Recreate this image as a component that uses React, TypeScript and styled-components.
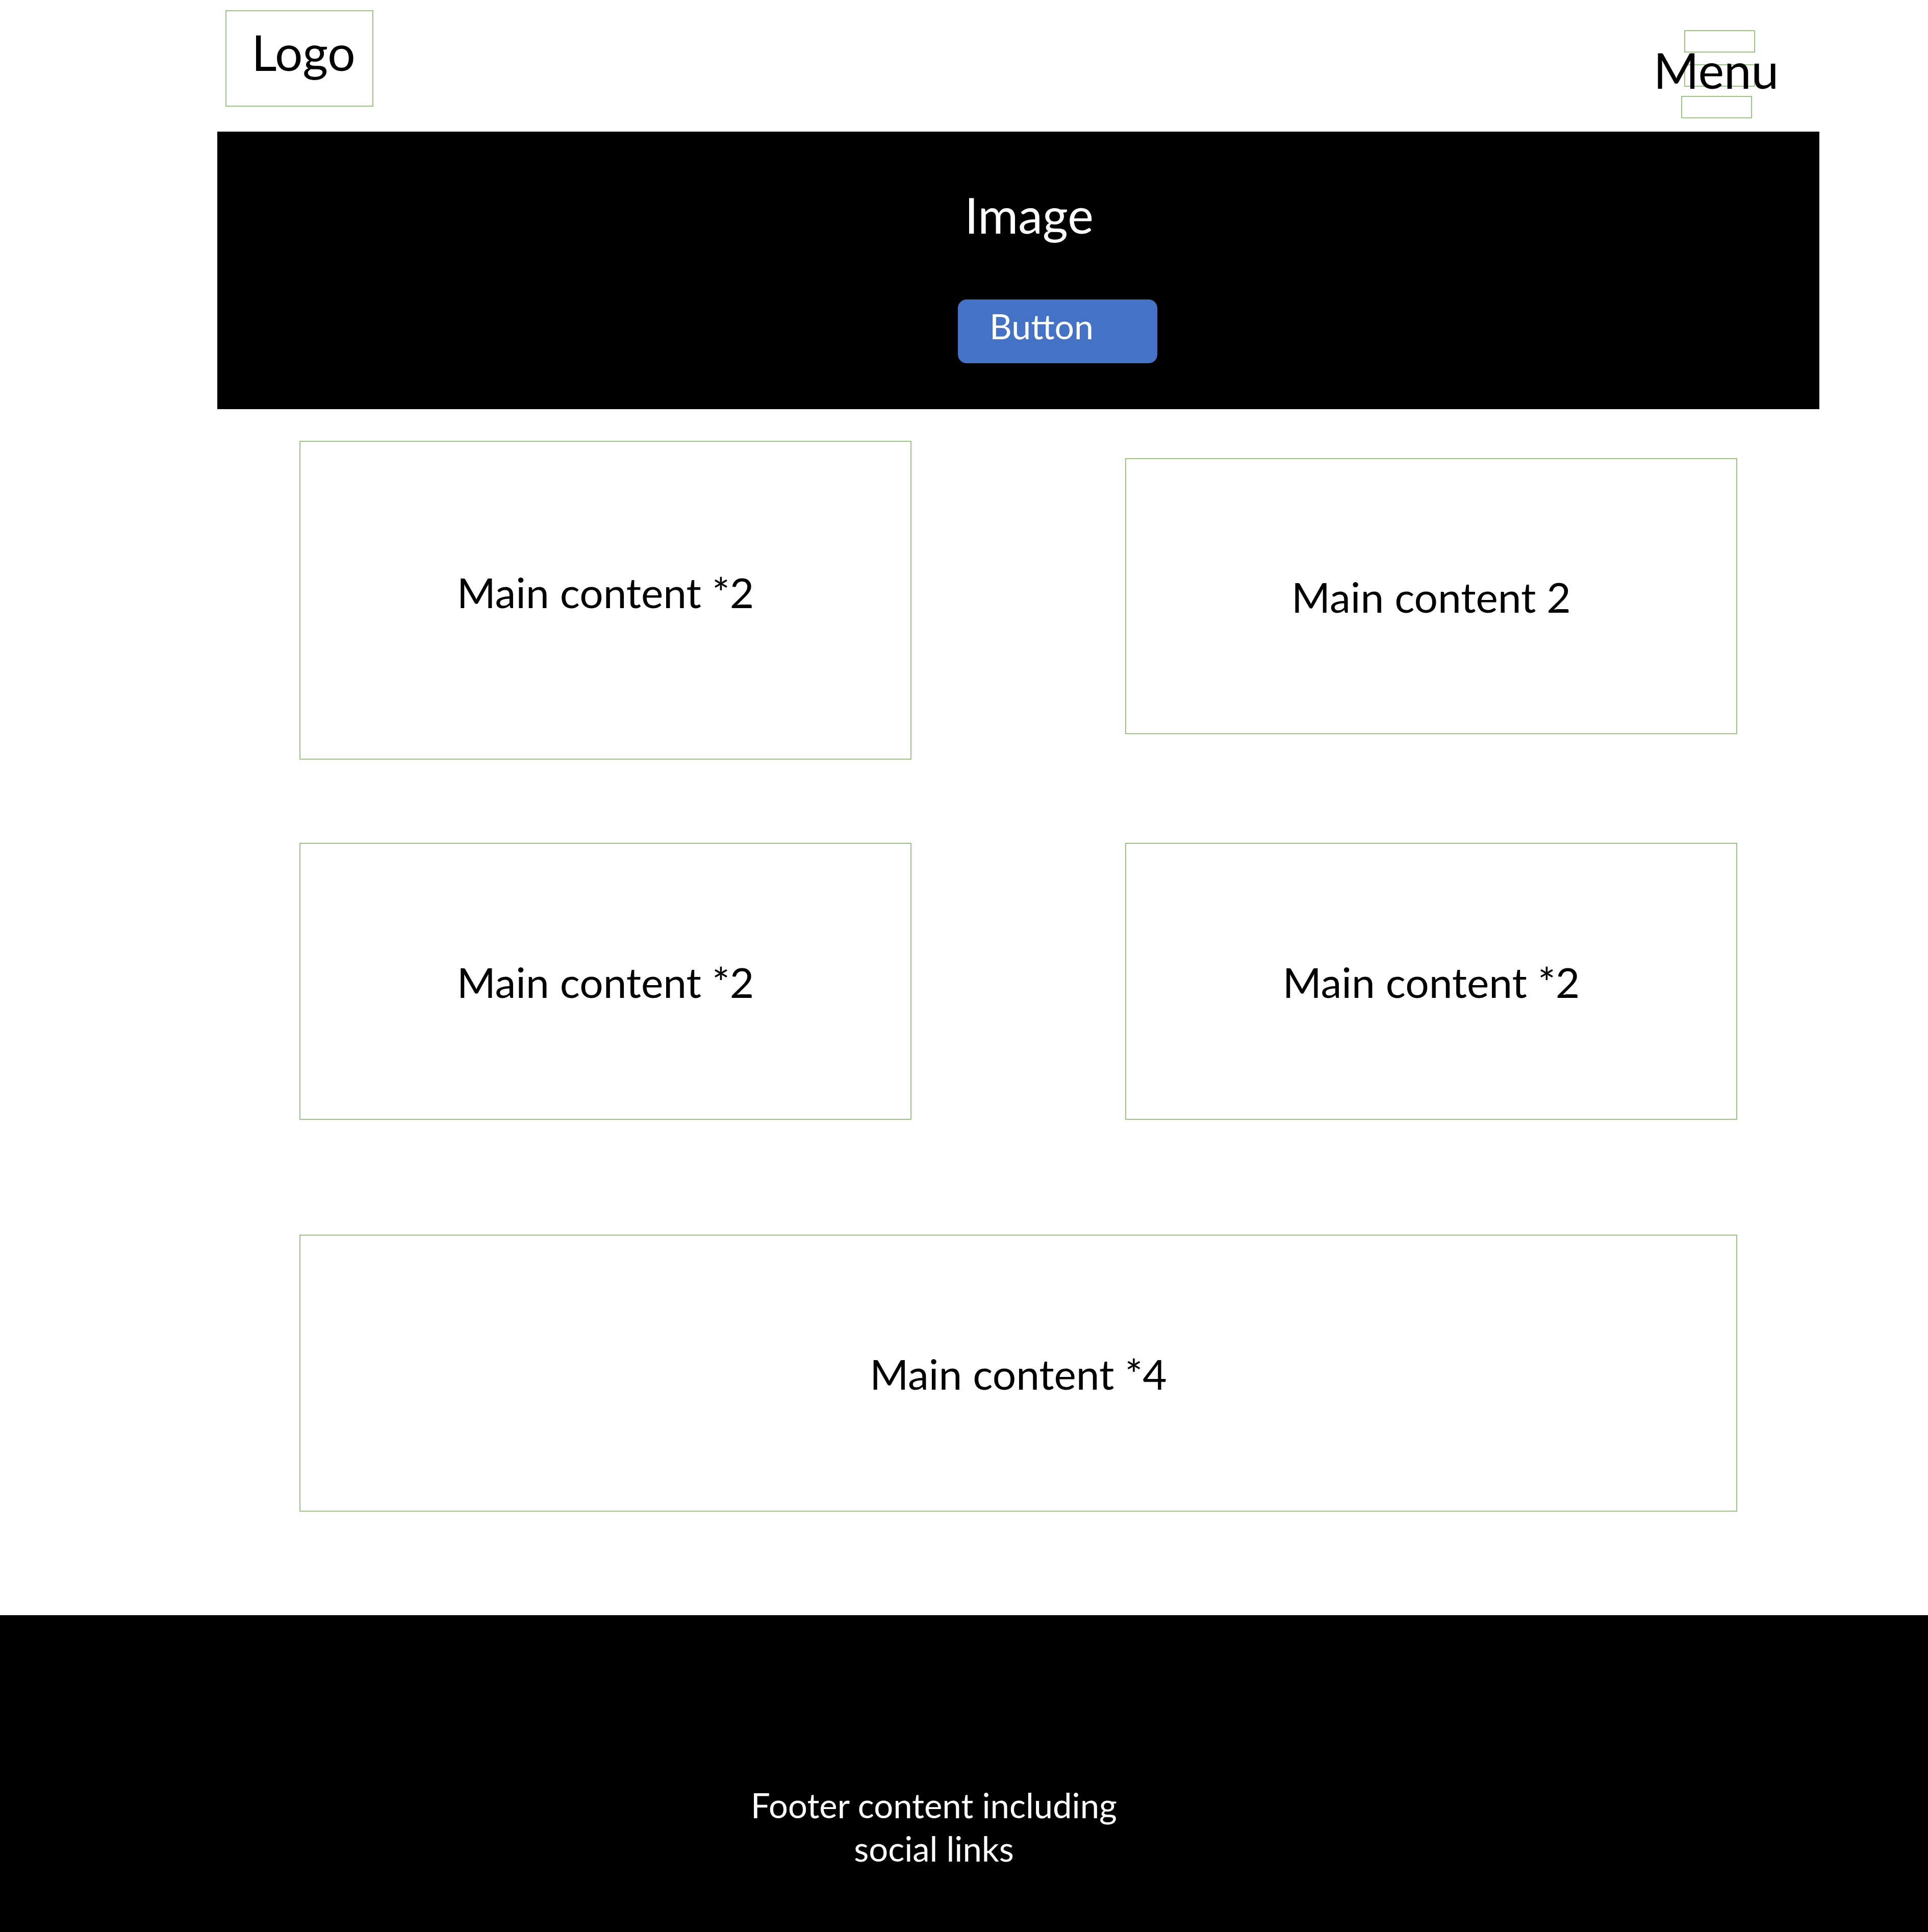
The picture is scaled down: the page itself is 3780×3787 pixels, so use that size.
import React from "react";
import styled, { createGlobalStyle } from "styled-components";

const GREEN = "#9cc584";
const FONT = `Lato, "Open Sans", "Noto Sans", sans-serif`;

const Global = createGlobalStyle`
  html, body { margin: 0; padding: 0; background: #ffffff; }
  body { font-family: ${FONT}; }
  #root { width: 3780px; height: 3787px; overflow: hidden; }
`;

const Page = styled.div`
  width: 3780px;
  height: 3787px;
  display: flex;
  flex-direction: column;
  background: #ffffff;
  color: #000000;
  font-family: ${FONT};
`;

const Header = styled.header`
  flex: none;
  height: 258px;
  box-sizing: border-box;
  padding: 0 339px 0 442px;
  display: flex;
  justify-content: space-between;
  align-items: flex-start;
`;

const LogoBox = styled.div`
  margin-top: 20px;
  width: 290px;
  height: 189px;
  box-sizing: border-box;
  border: 2px solid ${GREEN};
  display: flex;
  align-items: center;
  justify-content: center;
  padding: 0 0 25px 16px;
  font-size: 96px;
  line-height: 1;
`;

const MenuArea = styled.div`
  position: relative;
  margin-top: 59px;
  width: 145px;
  display: flex;
  flex-direction: column;
`;

const MenuBar = styled.div<{ $shift: number; $gap: number }>`
  width: 139px;
  height: 44px;
  box-sizing: border-box;
  border: 2px solid ${GREEN};
  margin-left: ${(p) => p.$shift}px;
  margin-top: ${(p) => p.$gap}px;
`;

const MenuLabel = styled.span`
  position: absolute;
  top: 30px;
  left: -60px;
  right: -52px;
  text-align: center;
  font-size: 96px;
  line-height: 1;
  white-space: nowrap;
`;

const Hero = styled.section`
  flex: none;
  margin-left: 426px;
  width: 3141px;
  height: 544px;
  box-sizing: border-box;
  padding-top: 115px;
  background: #000000;
  display: flex;
  flex-direction: column;
  align-items: center;
`;

const HeroTitle = styled.div`
  color: #ffffff;
  font-size: 96px;
  line-height: 1;
  margin-left: 42px;
`;

const HeroButton = styled.button`
  margin-top: 118px;
  margin-left: 154px;
  width: 391px;
  height: 125px;
  box-sizing: border-box;
  border: none;
  border-radius: 17px;
  background: #4472c4;
  color: #ffffff;
  font-family: ${FONT};
  font-size: 68px;
  line-height: 1;
  display: flex;
  align-items: flex-start;
  justify-content: flex-start;
  padding: 18px 0 0 62px;
  cursor: pointer;
`;

const Main = styled.main`
  flex: none;
  margin-left: 587px;
  width: 2819px;
  display: flex;
  flex-direction: column;
`;

const Row = styled.div<{ $top: number }>`
  display: flex;
  justify-content: space-between;
  align-items: flex-start;
  margin-top: ${(p) => p.$top}px;
`;

const Card = styled.div<{ $w: number; $h: number; $top?: number; $lift?: number }>`
  width: ${(p) => p.$w}px;
  height: ${(p) => p.$h}px;
  margin-top: ${(p) => p.$top ?? 0}px;
  box-sizing: border-box;
  border: 2px solid ${GREEN};
  display: flex;
  align-items: center;
  justify-content: center;
  padding-bottom: ${(p) => p.$lift ?? 0}px;
  font-size: 82px;
  line-height: 1;
  white-space: nowrap;
`;

const Footer = styled.footer`
  flex: 1;
  margin-top: 203px;
  background: #000000;
  color: #ffffff;
  display: flex;
  justify-content: center;
  align-items: flex-start;
  padding-top: 330px;
  box-sizing: border-box;
`;

const FooterText = styled.p`
  margin: 0 118px 0 0;
  font-size: 67px;
  line-height: 85px;
  text-align: center;
  white-space: nowrap;
`;

export default function App() {
  return (
    <>
      <Global />
      <Page>
        <Header>
          <LogoBox>Logo</LogoBox>
          <MenuArea>
            <MenuBar $shift={6} $gap={0} />
            <MenuBar $shift={6} $gap={23} />
            <MenuBar $shift={0} $gap={18} />
            <MenuLabel>Menu</MenuLabel>
          </MenuArea>
        </Header>
        <Hero>
          <HeroTitle>Image</HeroTitle>
          <HeroButton type="button">Button</HeroButton>
        </Hero>
        <Main>
          <Row $top={62}>
            <Card $w={1200} $h={625} $lift={34}>
              Main content *2
            </Card>
            <Card $w={1200} $h={541} $top={34}>
              Main content 2
            </Card>
          </Row>
          <Row $top={163}>
            <Card $w={1200} $h={543}>Main content *2</Card>
            <Card $w={1200} $h={543}>Main content *2</Card>
          </Row>
          <Row $top={225}>
            <Card $w={2819} $h={543}>Main content *4</Card>
          </Row>
        </Main>
        <Footer>
          <FooterText>
            Footer content including
            <br />
            social links
          </FooterText>
        </Footer>
      </Page>
    </>
  );
}
